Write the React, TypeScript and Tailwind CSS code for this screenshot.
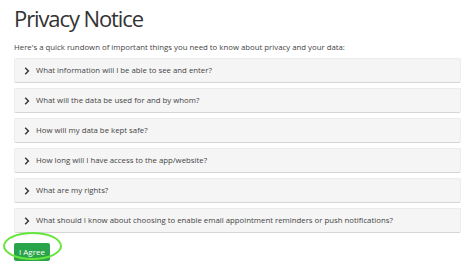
import React from "react";

const questions = [
  "What information will I be able to see and enter?",
  "What will the data be used for and by whom?",
  "How will my data be kept safe?",
  "How long will I have access to the app/website?",
  "What are my rights?",
  "What should I know about choosing to enable email appointment reminders or push notifications?",
];

function Chevron() {
  return (
    <svg width="6" height="8" viewBox="0 0 6 8" className="shrink-0" aria-hidden="true">
      <path d="M1.2 0.8 L4.4 4 L1.2 7.2" fill="none" stroke="#333" strokeWidth="1.4" />
    </svg>
  );
}

export default function App() {
  return (
    <div className="h-[265px] w-[463px] overflow-hidden bg-white pl-[14px] pr-[2px] font-['Open_Sans',sans-serif] text-[#333]">
      <h1 className="pt-[2px] text-[22px] leading-[32px] tracking-[-1.1px] text-[#333]">Privacy Notice</h1>
      <p className="mt-[7px] text-[7.8px] leading-[12px] text-[#444]">
        Here's a quick rundown of important things you need to know about privacy and your data:
      </p>
      <div className="mt-[5px] flex flex-col gap-[5px]">
        {questions.map((q) => (
          <div
            key={q}
            className="flex h-[25px] items-center gap-[6px] rounded-[2px] border border-[#ececec] border-b-[#d6d6d6] bg-[#f5f5f5] pl-[9px] text-[7.8px] text-[#444]"
          >
            <Chevron />
            <span>{q}</span>
          </div>
        ))}
      </div>
      <div className="relative mt-[4px] w-fit">
        <button className="h-[18px] rounded-[2px] bg-[#2aa44a] px-[5px] text-[8px] leading-[18px] text-white">
          I Agree
        </button>
        <div className="pointer-events-none absolute left-[-11px] top-[-5px] h-[28px] w-[59px] rounded-[50%] border-2 border-[#66e63c]" />
      </div>
    </div>
  );
}
